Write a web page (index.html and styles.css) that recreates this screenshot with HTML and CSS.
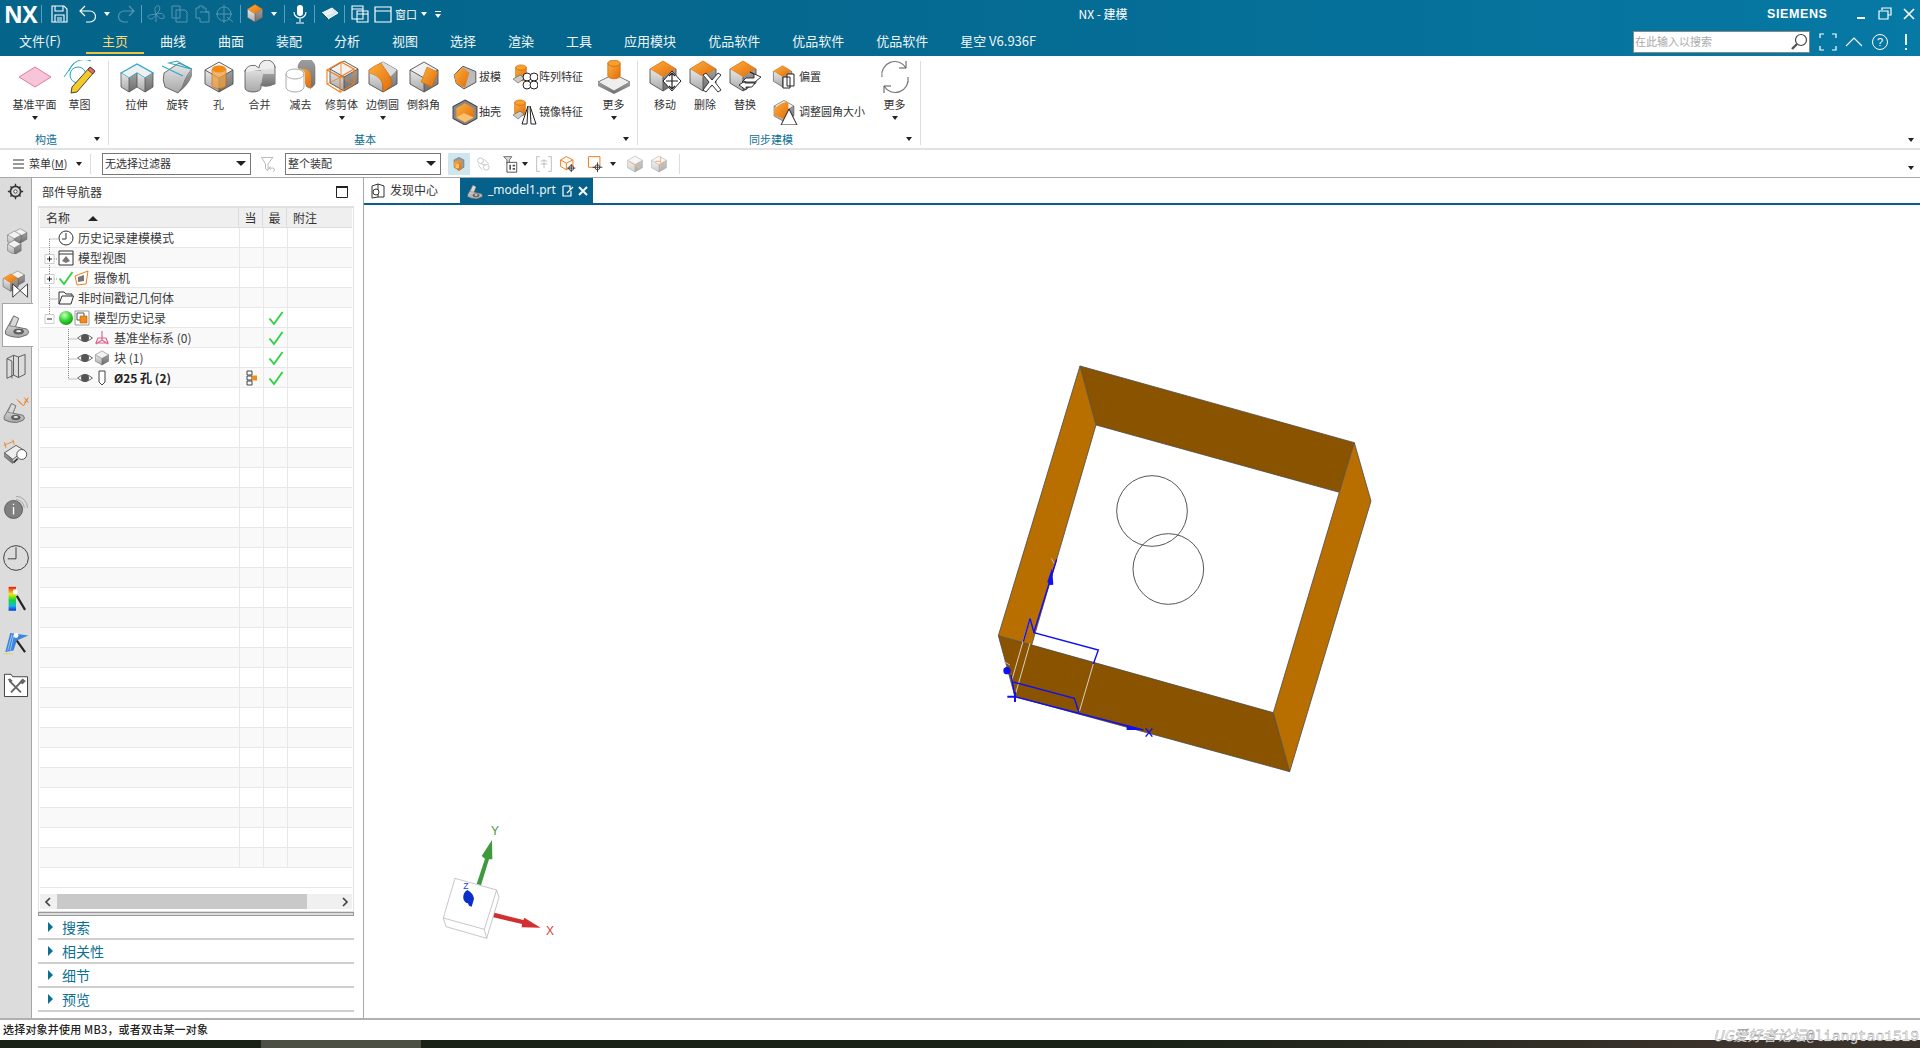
FILE: index.html
```html
<!DOCTYPE html>
<html lang="zh-CN">
<head>
<meta charset="utf-8">
<title>NX - 建模</title>
<link rel="stylesheet" href="styles.css">
</head>
<body>
<svg class="defs" aria-hidden="true">
  <defs>
    <linearGradient id="gl" x1="0" y1="0" x2="0" y2="1"><stop offset="0" stop-color="#e8e8e8"/><stop offset="1" stop-color="#a8a8a8"/></linearGradient>
    <linearGradient id="gd" x1="0" y1="0" x2="0" y2="1"><stop offset="0" stop-color="#a0a0a0"/><stop offset="1" stop-color="#6e6e6e"/></linearGradient>
    <linearGradient id="go" x1="0" y1="0" x2="1" y2="1"><stop offset="0" stop-color="#fbb040"/><stop offset="1" stop-color="#e26b08"/></linearGradient>
    <radialGradient id="gb" cx=".4" cy=".3" r=".8"><stop offset="0" stop-color="#c8ffc0"/><stop offset=".5" stop-color="#33d633"/><stop offset="1" stop-color="#0a8a12"/></radialGradient>
    <symbol id="cube" viewBox="0 0 34 34"><path d="M17 2 31 10 17 18 3 10z" fill="#f2f2f2"/><path d="M3 10 17 18V32L3 24z" fill="url(#gl)"/><path d="M17 18 31 10V24L17 32z" fill="url(#gd)"/><path d="M17 2 31 10V24L17 32 3 24V10zM3 10 17 18 31 10M17 18V32" fill="none" stroke="#505050" stroke-width=".9"/></symbol>
    <symbol id="ocube" viewBox="0 0 34 34"><path d="M15 1 28 9 15 17 2 9z" fill="url(#go)" stroke="#d86c08" stroke-width=".8"/><path d="M2 9 15 17V31L2 23z" fill="url(#gl)"/><path d="M15 17 28 9V23L15 31z" fill="url(#gd)"/><path d="M2 9V23L15 31 28 23V9M15 17V31" fill="none" stroke="#505050" stroke-width=".9"/></symbol>
    <symbol id="cyl" viewBox="0 0 34 34"><path d="M10 6V20A7 3.5 0 0 0 24 20V6z" fill="url(#go)" stroke="#c85f00" stroke-width=".8"/><ellipse cx="17" cy="6" rx="7" ry="3.5" fill="#f9a030" stroke="#c85f00" stroke-width=".8"/></symbol>
    <symbol id="part" viewBox="0 0 34 34"><path d="M3 24 13 6 19 9 15 19 29 22Q33 26 29 29L20 32Q9 32 3 28z" fill="url(#gl)" stroke="#555"/><path d="M13 6 19 9 15 19 8 18z" fill="#dadada" stroke="#555" stroke-width=".7"/><ellipse cx="19" cy="25" rx="6" ry="3" fill="#666" stroke="#333" stroke-width=".7"/><ellipse cx="19" cy="24.5" rx="3" ry="1.4" fill="#e8e8e8"/></symbol>
    <symbol id="check" viewBox="0 0 16 16"><path d="M1.5 8.5 6 14 14.5 2" fill="none" stroke="#2fd044" stroke-width="1.9"/></symbol>
    <symbol id="eye" viewBox="0 0 16 16"><path d="M.5 8Q8 1.5 15.5 8 8 14.5.5 8z" fill="#fff" stroke="#666"/><circle cx="8" cy="8" r="4" fill="#555"/></symbol>
  </defs>
</svg>

<header class="head">
  <div class="titlebar">
    <span class="nx">NX</span>
    <i class="qsep ml5"></i>
    <svg class="qi ml7" viewBox="0 0 20 20"><path d="M3 2H15L18 5V18H3zM6 2V7H14V2M6 18V11H15V18M8 14H13M8 16H13" fill="none" stroke="#fff" stroke-width="1.1"/></svg>
    <svg class="qi ml9" viewBox="0 0 20 20"><path d="M7 2 2 7 7 12M2 7H12A5.5 5.5 0 0 1 12 18H8" fill="none" stroke="#fff" stroke-width="1.2"/></svg>
    <i class="caret w ml6"></i>
    <svg class="qi ml6 dim" viewBox="0 0 20 20"><path d="M13 2 18 7 13 12M18 7H8A5.5 5.5 0 0 0 8 18H12" fill="none" stroke="#fff" stroke-width="1.2"/></svg>
    <i class="qsep ml5"></i>
    <svg class="qi ml4 dim" viewBox="0 0 20 20"><path d="M10 10C7 3 11 1 13 2 15 4 13 8 10 10ZM10 10C16 8 19 11 18 14 15 16 12 13 10 10ZM10 10C6 11 2 10 2 13 3 16 8 16 10 10ZM10 10V18" fill="none" stroke="#fff"/></svg>
    <svg class="qi ml3 dim" viewBox="0 0 20 20"><path d="M3 2H11V14H3zM7 6H16L18 8V18H7z" fill="none" stroke="#fff"/></svg>
    <svg class="qi ml3 dim" viewBox="0 0 20 20"><path d="M4 4H7V2H11V4H14V8H17V18H8V14H4zM8 8H17" fill="none" stroke="#fff"/></svg>
    <svg class="qi ml3 dim" viewBox="0 0 20 20"><circle cx="9" cy="10" r="7" fill="none" stroke="#fff"/><path d="M9 1V19M1 10H17M12 13 18 18" fill="none" stroke="#fff"/></svg>
    <i class="qsep ml5"></i>
    <svg class="qi ml4" viewBox="0 0 34 34"><use href="#ocube" width="34" height="34" x="2"/></svg>
    <i class="caret w ml6"></i>
    <i class="qsep ml7"></i>
    <svg class="qi ml5" viewBox="0 0 20 20"><rect x="7" y="1" width="6" height="11" rx="3" fill="#fff"/><path d="M4 8A6 6 0 0 0 16 8M10 14V18M6 19H14" fill="none" stroke="#fff" stroke-width="1.1"/></svg>
    <i class="qsep ml4"></i>
    <svg class="qi ml5" viewBox="0 0 20 20"><path d="M2 9 12 4 18 9 8 15zM5 9 12 6M5 11 13 8" fill="#d8e8ee" stroke="#fff"/><path d="M2 9 8 15" stroke="#444"/></svg>
    <i class="qsep ml4"></i>
    <svg class="qi ml5" viewBox="0 0 20 20"><path d="M2 2H13V15H2zM2 5H13M7 7H18V18H7zM7 10H18" fill="none" stroke="#fff" stroke-width="1.1"/></svg>
    <svg class="qi ml3" viewBox="0 0 20 20"><path d="M2 3H18V18H2zM2 7H18" fill="none" stroke="#fff" stroke-width="1.2"/></svg>
    <span class="qtext ml2">窗口</span>
    <i class="caret w ml4"></i>
    <span class="qmore ml8"><i class="caret w"></i></span>
    <span class="apptitle">NX - 建模</span>
    <span class="siemens">SIEMENS</span>
    <span class="winbtns">
      <svg class="wb" viewBox="0 0 14 14"><path d="M3 11H11" stroke="#fff" stroke-width="2"/></svg>
      <svg class="wb" viewBox="0 0 14 14"><path d="M4 3V1H13V8H10M1 4H10V12H1z" fill="none" stroke="#fff" stroke-width="1.2"/></svg>
      <svg class="wb" viewBox="0 0 14 14"><path d="M2 2 12 12M12 2 2 12" stroke="#fff" stroke-width="1.6"/></svg>
    </span>
  </div>
  <nav class="menubar">
    <span class="mi mi-file">文件(F)</span>
    <span class="mi active">主页</span>
    <span class="mi">曲线</span>
    <span class="mi">曲面</span>
    <span class="mi">装配</span>
    <span class="mi">分析</span>
    <span class="mi">视图</span>
    <span class="mi">选择</span>
    <span class="mi">渲染</span>
    <span class="mi">工具</span>
    <span class="mi">应用模块</span>
    <span class="mi">优品软件</span>
    <span class="mi">优品软件</span>
    <span class="mi">优品软件</span>
    <span class="mi">星空 V6.936F</span>
    <div class="searchwrap">
      <div class="search"><span>在此输入以搜索</span>
        <svg class="mag" viewBox="0 0 18 18"><circle cx="11" cy="7" r="5.5" fill="#fff" stroke="#444" stroke-width="1.2"/><path d="M7 11 2 16" stroke="#555" stroke-width="2.4"/></svg>
      </div>
      <svg class="hi ml9" viewBox="0 0 18 18"><path d="M1 5V1H5M13 1H17V5M17 13V17H13M5 17H1V13" fill="none" stroke="#fff" stroke-width="1.2"/></svg>
      <svg class="hi ml8" viewBox="0 0 18 18"><path d="M1 13 9 5 17 13" fill="none" stroke="#fff" stroke-width="1.1"/></svg>
      <svg class="hi ml8" viewBox="0 0 18 18"><circle cx="9" cy="9" r="7.5" fill="none" stroke="#fff"/><text x="9" y="13" class="hq">?</text></svg>
      <svg class="hi ml8" viewBox="0 0 18 18"><path d="M9 1V12M9 15V17" stroke="#fff" stroke-width="1.8"/></svg>
    </div>
  </nav>
</header>

<section class="ribbon">
  <div class="grp g1">
    <div class="tools">
      <div class="tool wide"><svg class="ic" viewBox="0 0 34 34"><path d="M1 17 17 7 33 17 17 27z" fill="#f6c6d8" stroke="#e27aa2"/></svg><span>基准平面</span><i class="caret"></i></div>
      <div class="tool wide"><svg class="ic" viewBox="0 0 34 34"><path d="M1 17 11 3M6 11A16 16 0 0 1 28 1" fill="none" stroke="#25a5c8"/><circle cx="15" cy="15" r="8" fill="none" stroke="#25a5c8"/><path d="M27 7 32 11 14 32 8 33 9 27z" fill="#f5c92a" stroke="#333" stroke-width=".9"/><path d="M27 7 32 11 30 14 25 10z" fill="#e86a6a" stroke="#333" stroke-width=".7"/></svg><span>草图</span></div>
    </div>
    <div class="glabel"><span>构造</span><i class="caret"></i></div>
  </div>
  <i class="gsep"></i>
  <div class="grp g2">
    <div class="tools">
      <div class="tool"><svg class="ic" viewBox="0 0 34 34"><path d="M1 13 17 4 33 13 25 18 17 13 9 18z" fill="#f0f0f0" stroke="#27a8cc" stroke-width="1.2"/><path d="M1 13 9 18V32L1 27z" fill="url(#gl)"/><path d="M9 18 17 13V27L9 32z" fill="url(#gd)"/><path d="M17 13 25 18V32L17 27z" fill="url(#gl)"/><path d="M25 18 33 13V27L25 32z" fill="url(#gd)"/><path d="M1 13V27L9 32V18M9 32 17 27 25 32 33 27V13M17 13V27M25 18V32" fill="none" stroke="#505050" stroke-width=".8"/></svg><span>拉伸</span></div>
      <div class="tool"><svg class="ic" viewBox="0 0 34 34"><path d="M3 13 18 3 31 9Q26 15 24 20 22 28 17 33L4 27Q1 20 3 13z" fill="url(#gl)" stroke="#505050" stroke-width=".8"/><path d="M17 33Q22 28 24 20L31 9V16Q27 26 17 33z" fill="url(#gd)"/><path d="M1 6 22 16M8 3 30 9 16 1z" fill="none" stroke="#27a8cc" stroke-width="1.1"/></svg><span>旋转</span></div>
      <div class="tool"><svg class="ic" viewBox="0 0 34 34"><use href="#cube" width="34" height="34"/><path d="M10 9V25A7 3.5 0 0 0 24 25V9z" fill="#f0a040" fill-opacity=".75" stroke="#c85f00" stroke-width=".6"/><ellipse cx="17" cy="9" rx="7" ry="3.5" fill="#f58a12"/></svg><span>孔</span></div>
      <div class="tool"><svg class="ic" viewBox="0 0 34 34"><path d="M2 10V28A8 4 0 0 0 18 28V24H32V6H18V10z" fill="url(#gl)" stroke="#505050" stroke-width=".8"/><path d="M2 12A8 8 0 0 1 16 8 8 8 0 0 1 32 8" fill="#eee" stroke="#505050" stroke-width=".8"/><path d="M20 14H32V24Q26 28 18 26z" fill="url(#gd)"/></svg><span>合并</span></div>
      <div class="tool"><svg class="ic" viewBox="0 0 34 34"><ellipse cx="11" cy="14" rx="9" ry="5" fill="none" stroke="#aaa"/><path d="M2 14V27A9 5 0 0 0 20 27V14" fill="none" stroke="#aaa"/><path d="M14 8A8 8 0 0 1 31 7V24Q27 31 22 26V14Q20 9 14 8z" fill="url(#gd)" stroke="#777" stroke-width=".6"/><path d="M14 9Q21 9 21 14V24L27 29V16Q26 7 14 9z" fill="url(#go)"/></svg><span>减去</span></div>
      <div class="tool"><svg class="ic" viewBox="0 0 34 34"><use href="#cube" width="34" height="34" x="2" y="-1"/><path d="M2 10 16 2 29 9 15 17zM2 10V24L15 32V17M15 32 29 24V9" fill="none" stroke="#ee7d1c" stroke-width="1.1"/><path d="M2 24 16 17 29 24M16 2V17" fill="none" stroke="#ee7d1c" stroke-width=".8"/></svg><span>修剪体</span><i class="caret"></i></div>
      <div class="tool"><svg class="ic" viewBox="0 0 34 34"><use href="#cube" width="34" height="34"/><path d="M17 2 31 10 24 17Q16 11 5 14 1 14 3 10z" fill="#ddd"/><path d="M15 3 24 16Q26 20 25 26L17 32Q18 22 12 17 8 14 3 13 2 8 15 3z" fill="url(#go)" stroke="#c85f00" stroke-width=".5"/></svg><span>边倒圆</span><i class="caret"></i></div>
      <div class="tool"><svg class="ic" viewBox="0 0 34 34"><use href="#cube" width="34" height="34"/><path d="M20 7 31 12 25 27 14 22z" fill="url(#go)" stroke="#c85f00" stroke-width=".5"/></svg><span>倒斜角</span></div>
      <div class="scol c1">
        <div class="srow"><svg class="sic" viewBox="0 0 24 24"><path d="M10 2 22 7V17L11 23 4 18 2 10z" fill="#bbb" stroke="#444" stroke-width=".8"/><path d="M10 3 16 8 12 22 4 18 2 10z" fill="url(#go)"/></svg><span>拔模</span></div>
        <div class="srow"><svg class="sic" viewBox="0 0 24 24"><path d="M12 1 23 7V18L12 24 1 18V7z" fill="#888" stroke="#444"/><path d="M12 4 20 8.500V17L12 21.500 4 17V8.500z" fill="url(#go)"/><path d="M4 17 11 13 20 17 12 21.500z" fill="#fbc070"/></svg><span>抽壳</span></div>
      </div>
      <div class="scol c2">
        <div class="srow"><svg class="sic" viewBox="0 0 26 26"><use href="#cyl" width="26" height="26" x="-4" y="-1"/><path d="M1 15 8 11 13 14 6 19z" fill="#ccc" stroke="#555" stroke-width=".6"/><circle cx="15" cy="13" r="4" fill="#fff" stroke="#222"/><circle cx="22" cy="13" r="4" fill="#fff" stroke="#222"/><circle cx="15" cy="21" r="4" fill="#fff" stroke="#222"/><circle cx="22" cy="21" r="4" fill="#fff" stroke="#222"/></svg><span>阵列特征</span></div>
        <div class="srow"><svg class="sic" viewBox="0 0 26 26"><use href="#cyl" width="26" height="26" x="-5" y="-1"/><path d="M1 16 8 12 12 15 6 20z" fill="#ccc" stroke="#555" stroke-width=".6"/><path d="M16 7 10 25H15zM18 7 24 25H19z" fill="#fff" stroke="#222"/></svg><span>镜像特征</span></div>
      </div>
      <div class="tool more"><svg class="ic" viewBox="0 0 34 34"><path d="M17 14 33 22 17 31 1 22z" fill="#eee" stroke="#555" stroke-width=".8"/><path d="M1 22V26L17 34V31zM17 31V34L33 26V22z" fill="url(#gd)"/><use href="#cyl" width="30" height="30" x="2" y="-2"/></svg><span>更多</span><i class="caret"></i></div>
    </div>
    <div class="glabel"><span>基本</span><i class="caret"></i></div>
  </div>
  <i class="gsep"></i>
  <div class="grp g3">
    <div class="tools">
      <div class="tool t40"><svg class="ic" viewBox="0 0 34 34"><use href="#ocube" width="34" height="34"/><path d="M24 11 33 21 24 31 15 21z" fill="#fff" stroke="#222"/><path d="M24 14V28M18 21H30M21 16 24 13 27 16M21 26 24 29 27 26" fill="none" stroke="#222" stroke-width="1.2"/></svg><span>移动</span></div>
      <div class="tool t40"><svg class="ic" viewBox="0 0 34 34"><use href="#ocube" width="34" height="34"/><path d="M15 15 18 13 24 20 30 13 33 15 27 22 33 30 30 32 24 25 18 32 15 30 21 22z" fill="#fff" stroke="#333"/></svg><span>删除</span></div>
      <div class="tool t40"><svg class="ic" viewBox="0 0 34 34"><use href="#ocube" width="34" height="34"/><path d="M22 12 33 17 27 22H14L18 18H26V14zM18 30 11 25 17 21V23H27L24 27H18z" fill="#fff" stroke="#222" stroke-width=".9"/></svg><span>替换</span></div>
      <div class="scol c3">
        <div class="srow"><svg class="sic" viewBox="0 0 26 26"><use href="#ocube" width="24" height="24" y="1"/><path d="M11 13H18V24H11zM15 10H22V22H15z" fill="#fff" stroke="#222"/></svg><span>偏置</span></div>
        <div class="srow"><svg class="sic" viewBox="0 0 26 26"><use href="#cube" width="24" height="24"/><path d="M2 10Q10 2 16 3 18 12 12 20L2 16z" fill="url(#go)"/><path d="M17 10 25 26H9z" fill="#fff" stroke="#222"/></svg><span>调整圆角大小</span></div>
      </div>
      <div class="tool more2"><svg class="ic" viewBox="0 0 34 34"><path d="M4 17A13 13 0 0 1 28 8M30 17A13 13 0 0 1 6 26" fill="none" stroke="#777" stroke-width="1.2"/><path d="M28 1V8H21M6 33V26H13" fill="none" stroke="#555"/></svg><span>更多</span><i class="caret"></i></div>
    </div>
    <div class="glabel"><span>同步建模</span><i class="caret"></i></div>
  </div>
  <i class="gsep"></i>
  <i class="caret endcaret"></i>
</section>

<section class="toolbar">
  <svg class="burger" viewBox="0 0 11 10"><path d="M0 1H11M0 5H11M0 9H11" stroke="#333"/></svg>
  <span class="tbtext">菜单(<u>M</u>)</span>
  <i class="caret ml5"></i>
  <i class="tsep ml8"></i>
  <div class="combo cb1 ml11"><span>无选择过滤器</span><i class="caret big"></i></div>
  <svg class="tb ml6" viewBox="0 0 22 22"><path d="M3 3H17L11 11V19L8 17V11z" fill="#fff" stroke="#aaa"/><path d="M14 14 12 16 14 18M12 16H17A2 2 0 0 1 17 20" fill="none" stroke="#aaa"/></svg>
  <div class="combo cb2 ml6"><span>整个装配</span><i class="caret big"></i></div>
  <svg class="tb on ml7" viewBox="0 0 22 22"><path d="M11 3 17 6V15L11 19 5 15V6z" fill="#9a9a9a" stroke="#666" stroke-width=".7"/><path d="M5 9 11 6 14 8V17L11 19 5 15z" fill="url(#go)"/><path d="M7 11H11V16H7z" fill="#fbc070"/></svg>
  <svg class="tb ml2 faint" viewBox="0 0 22 22"><circle cx="8" cy="7" r="3.500" fill="none" stroke="#888"/><circle cx="15" cy="15" r="3.500" fill="none" stroke="#888"/><path d="M5 12 10 18M12 5 18 11M8 10 14 13" stroke="#888" fill="none"/></svg>
  <svg class="tb ml6" viewBox="0 0 22 22"><path d="M2 2H12L9 6V10H6V6z" fill="#ddd" stroke="#333" stroke-width=".8"/><path d="M6 9H18V21H6z" fill="#fff" stroke="#333"/><path d="M13 12H16V14H13zM13 16H16V18H13zM9 12H11V18H9z" fill="#555"/></svg>
  <i class="caret"></i>
  <svg class="tb ml5 faint" viewBox="0 0 22 22"><path d="M2 2H6M2 2V20H6M16 2H20V20H16M11 6V16M7 11H15M7 8 11 6 15 8" fill="none" stroke="#777"/></svg>
  <svg class="tb ml2" viewBox="0 0 22 22"><path d="M9 2 17 6V14L9 18 2 14V6zM2 6 9 10 17 6M9 10V18" fill="none" stroke="#ee7d1c" stroke-width="1.2"/><circle cx="15" cy="16" r="3" fill="#fff" stroke="#222"/><path d="M15 11V21M10 16H20" stroke="#222"/></svg>
  <svg class="tb ml5" viewBox="0 0 22 22"><path d="M3 2H17V15H3z" fill="none" stroke="#ee7d1c" stroke-width="1.2"/><circle cx="14" cy="15" r="3" fill="#fff" stroke="#222"/><path d="M14 9V21M8 15H20" stroke="#222"/></svg>
  <i class="caret ml4"></i>
  <svg class="tb ml8 faint" viewBox="0 0 34 34"><use href="#cube" width="34" height="34"/><path d="M6 12 26 24" stroke="#ee7d1c" stroke-width="2"/></svg>
  <svg class="tb ml2 faint" viewBox="0 0 34 34"><use href="#cube" width="34" height="34"/><path d="M20 3V28M20 12H10" stroke="#ee7d1c" stroke-width="2"/></svg>
  <i class="tsep ml9"></i>
  <i class="caret endcaret2"></i>
</section>

<main class="main">
  <aside class="rail">
    <svg class="ri gear" viewBox="0 0 20 20"><circle cx="10" cy="10" r="6" fill="none" stroke="#333" stroke-width="2"/><circle cx="10" cy="10" r="2" fill="#fff" stroke="#333"/><path d="M10 1V4M10 16V19M1 10H4M16 10H19M4 4 6 6M14 14 16 16M16 4 14 6M4 16 6 14" stroke="#333" stroke-width="1.6"/></svg>
    <div class="rslot mt18"><svg class="ri" viewBox="0 0 34 34"><use href="#cube" width="20" height="20" x="12" y="2"/><use href="#cube" width="20" height="20" x="5" y="5"/><use href="#cube" width="20" height="20" x="5" y="16"/></svg></div>
    <div class="rslot mt8"><svg class="ri" viewBox="0 0 34 34"><use href="#cube" width="20" height="20" x="9"/><use href="#ocube" width="24" height="24" y="4"/><path d="M13 17 31 33V17L13 33z" fill="#fff" stroke="#222"/></svg></div>
    <div class="rslot ractive mt1"><svg class="ri" viewBox="0 0 34 34"><use href="#part" width="34" height="34"/></svg></div>
    <div class="rslot mt1"><svg class="ri" viewBox="0 0 34 34"><path d="M6 8 14 4V28L6 32zM14 4 20 6 28 3V27L20 31 14 28M20 6V31" fill="none" stroke="#444"/><path d="M6 8 12 11V32" fill="none" stroke="#444"/></svg></div>
    <div class="rslot mt8"><svg class="ri" viewBox="0 0 34 34"><use href="#part" width="30" height="30" y="4"/><path d="M20 6 26 12 31 4M18 4 24 10M27 2 32 8M32 2 27 8" fill="none" stroke="#ee7d1c" stroke-width="1.200"/></svg></div>
    <div class="rslot mt6"><svg class="ri" viewBox="0 0 34 34"><path d="M3 18 17 9 27 15 13 26z" fill="#eee" stroke="#444"/><path d="M3 18V23L13 31V26z" fill="url(#gd)" stroke="#444" stroke-width=".6"/><circle cx="24" cy="20" r="6" fill="#fff" stroke="#333"/><path d="M19 25 14 30" stroke="#333" stroke-width="2"/><path d="M2 9 14 4M3 5 5 12M13 2 15 8" fill="none" stroke="#ee7d1c"/></svg></div>
    <div class="rslot mt19"><svg class="ri" viewBox="0 0 34 34"><circle cx="14" cy="20" r="11" fill="#808080" stroke="#555"/><path d="M14 13V14.500M14 17V26" stroke="#fff" stroke-width="1.6"/><path d="M17 4A14 14 0 0 1 31 18M17 8A10 10 0 0 1 27 18" fill="none" stroke="#999"/></svg></div>
    <div class="rslot mt15"><svg class="ri" viewBox="0 0 34 34"><circle cx="17" cy="17" r="15" fill="none" stroke="#333" stroke-width="1.100"/><path d="M17 4V18H7" fill="none" stroke="#333" stroke-width="1.100"/></svg></div>
    <div class="rslot mt6"><svg class="ri" viewBox="0 0 34 34"><defs><linearGradient id="rb" x1="0" y1="0" x2="0" y2="1"><stop offset="0" stop-color="#e51616"/><stop offset=".3" stop-color="#f5e51c"/><stop offset=".55" stop-color="#18d82c"/><stop offset=".8" stop-color="#18b4e8"/><stop offset="1" stop-color="#1030d0"/></linearGradient></defs><rect x="8" y="1" width="9" height="29" fill="url(#rb)"/><path d="M18 12 28 29" stroke="#222" stroke-width="2.600"/><circle cx="16" cy="7" r="3" fill="#fff"/></svg></div>
    <div class="rslot mt7"><svg class="ri" viewBox="0 0 34 34"><path d="M4 28 10 5 32 8 18 14 14 26z" fill="#3d85dc"/><path d="M7 26 12 7M10 26 14 8" stroke="#a8d0f0"/><path d="M2 30H14" stroke="#e8c840" stroke-width="1.400" stroke-dasharray="2 1"/><path d="M18 14 28 28" stroke="#222" stroke-width="2.600"/><circle cx="17" cy="8" r="3" fill="#fff"/></svg></div>
    <div class="rslot mt6"><svg class="ri" viewBox="0 0 34 34"><path d="M3 31V4H11L13 7H31V31z" fill="#fff" stroke="#222"/><path d="M9 12 23 26M25 11 11 26" fill="none" stroke="#666" stroke-width="2.400"/><path d="M7 10 10 9 13 12 10 14zM21 14 25 9 29 12 25 16z" fill="#666"/></svg></div>
  </aside>

  <section class="panel">
    <div class="ptitle"><span>部件导航器</span><svg class="pmax" viewBox="0 0 12 12"><path d="M.5.5H11.500V11.500H.5z" fill="none" stroke="#222"/><path d="M0 1H12" stroke="#222" stroke-width="2"/></svg></div>
    <div class="tree">
      <div class="thead"><div class="th first">名称<i class="sortup"></i></div><div class="th ctr">当</div><div class="th ctr">最</div><div class="th">附注</div></div>
      <div class="tbody">
        <div class="row"><div class="nm p1"><svg class="ti" viewBox="0 0 16 16"><circle cx="8" cy="8" r="7" fill="#fff" stroke="#333"/><path d="M8 3V9H4" fill="none" stroke="#333"/></svg><span class="tx">历史记录建模模式</span></div><i></i><i></i><i></i></div>
        <div class="row alt"><div class="nm p1"><svg class="ti" viewBox="0 0 16 16"><path d="M1 1H15V15H1zM1 4H15" fill="#fff" stroke="#333"/><path d="M4 11 8 6 12 11 8 13z" fill="#777"/></svg><span class="tx">模型视图</span></div><i></i><i></i><i></i></div>
        <div class="row"><div class="nm p1"><svg class="ti" viewBox="0 0 16 16"><use href="#check"/></svg><svg class="ti" viewBox="0 0 16 16"><path d="M1 6 14 1 12 14 3 15z" fill="#fff" stroke="#ee7d1c"/><path d="M4 7 10 5V11L4 12z" fill="#777"/></svg><span class="tx">摄像机</span></div><i></i><i></i><i></i></div>
        <div class="row alt"><div class="nm p1"><svg class="ti" viewBox="0 0 16 16"><path d="M1 14V2H6L8 4H14V6M1 14 4 6H15.500L13 14z" fill="none" stroke="#333"/></svg><span class="tx">非时间戳记几何体</span></div><i></i><i></i><i></i></div>
        <div class="row"><div class="nm p1"><svg class="ti" viewBox="0 0 16 16"><circle cx="8" cy="8" r="7" fill="url(#gb)"/></svg><svg class="ti" viewBox="0 0 16 16"><path d="M1 1H15V15H1z" fill="#fff" stroke="#999"/><path d="M3 3H10V10H3z" fill="#fff" stroke="#555"/><path d="M6 6H13V13H6z" fill="#f08c1c" stroke="#b85a00" stroke-width=".6"/></svg><span class="tx">模型历史记录</span></div><i></i><i class="ck"><svg class="ti" viewBox="0 0 16 16"><use href="#check"/></svg></i><i></i></div>
        <div class="row alt"><div class="nm p2"><svg class="ti" viewBox="0 0 16 16"><use href="#eye"/></svg><svg class="ti" viewBox="0 0 16 16"><path d="M8 1V10L2 14M8 10 14 14M4 8H12L14 13H2z" fill="none" stroke="#d9668f" stroke-width="1.200"/></svg><span class="tx">基准坐标系 (0)</span></div><i></i><i class="ck"><svg class="ti" viewBox="0 0 16 16"><use href="#check"/></svg></i><i></i></div>
        <div class="row"><div class="nm p2"><svg class="ti" viewBox="0 0 16 16"><use href="#eye"/></svg><svg class="ti" viewBox="0 0 34 34"><use href="#cube" width="34" height="34"/></svg><span class="tx">块 (1)</span></div><i></i><i class="ck"><svg class="ti" viewBox="0 0 16 16"><use href="#check"/></svg></i><i></i></div>
        <div class="row alt"><div class="nm p2"><svg class="ti" viewBox="0 0 16 16"><use href="#eye"/></svg><svg class="ti" viewBox="0 0 16 16"><path d="M5 1H11V12L8 15 5 12z" fill="#fff" stroke="#444"/></svg><span class="tx bold">Ø25 孔 (2)</span></div><i class="ck"><svg class="ti small" viewBox="0 0 12 16"><path d="M1 1H6V5H1zM1 6H6V10H1zM1 11H6V15H1zM6 8H11" fill="none" stroke="#444"/><path d="M6 5.500H11V10.500H6z" fill="#f08c1c"/></svg></i><i class="ck"><svg class="ti" viewBox="0 0 16 16"><use href="#check"/></svg></i><i></i></div>
        <div class="row"><div class="nm"></div><i></i><i></i><i></i></div><div class="row alt"><div class="nm"></div><i></i><i></i><i></i></div>
        <div class="row"><div class="nm"></div><i></i><i></i><i></i></div><div class="row alt"><div class="nm"></div><i></i><i></i><i></i></div>
        <div class="row"><div class="nm"></div><i></i><i></i><i></i></div><div class="row alt"><div class="nm"></div><i></i><i></i><i></i></div>
        <div class="row"><div class="nm"></div><i></i><i></i><i></i></div><div class="row alt"><div class="nm"></div><i></i><i></i><i></i></div>
        <div class="row"><div class="nm"></div><i></i><i></i><i></i></div><div class="row alt"><div class="nm"></div><i></i><i></i><i></i></div>
        <div class="row"><div class="nm"></div><i></i><i></i><i></i></div><div class="row alt"><div class="nm"></div><i></i><i></i><i></i></div>
        <div class="row"><div class="nm"></div><i></i><i></i><i></i></div><div class="row alt"><div class="nm"></div><i></i><i></i><i></i></div>
        <div class="row"><div class="nm"></div><i></i><i></i><i></i></div><div class="row alt"><div class="nm"></div><i></i><i></i><i></i></div>
        <div class="row"><div class="nm"></div><i></i><i></i><i></i></div><div class="row alt"><div class="nm"></div><i></i><i></i><i></i></div>
        <div class="row"><div class="nm"></div><i></i><i></i><i></i></div><div class="row alt"><div class="nm"></div><i></i><i></i><i></i></div>
        <div class="row"><div class="nm"></div><i></i><i></i><i></i></div><div class="row alt"><div class="nm"></div><i></i><i></i><i></i></div>
        <div class="row"><div class="nm"></div><i></i><i></i><i></i></div><div class="row alt"><div class="nm"></div><i></i><i></i><i></i></div>
        <div class="row"><div class="nm"></div></div>
        <svg class="treelines" viewBox="0 0 60 170">
          <path d="M9.500 10V90M9.500 10H18M14 30H18M14 50H18M9.500 70H18M28.500 100V150M28.500 110H37M28.500 130H37M28.500 150H37" fill="none" stroke="#888" stroke-dasharray="1 1"/>
          <path d="M5 25.500H14V34.500H5zM5 45.500H14V54.500H5zM5 85.500H14V94.500H5z" fill="#fff" stroke="#ccc"/>
          <path d="M7 30H12M9.500 27.500V32.500M7 50H12M9.500 47.500V52.500M7 90H12" stroke="#222"/>
        </svg>
      </div>
      <div class="hscroll"><svg class="sc" viewBox="0 0 10 10"><path d="M7 1 3 5 7 9" fill="none" stroke="#444" stroke-width="1.700"/></svg><i class="thumb"></i><svg class="sc" viewBox="0 0 10 10"><path d="M3 1 7 5 3 9" fill="none" stroke="#444" stroke-width="1.700"/></svg></div>
    </div>
    <i class="splitter"></i>
    <div class="acc"><i class="tri"></i><span>搜索</span></div>
    <div class="acc"><i class="tri"></i><span>相关性</span></div>
    <div class="acc"><i class="tri"></i><span>细节</span></div>
    <div class="acc"><i class="tri"></i><span>预览</span></div>
  </section>

  <section class="work">
    <div class="tabs">
      <div class="tab"><svg class="tabic" viewBox="0 0 16 16"><path d="M2 3 8 1V14L2 15zM8 1 14 3V14L8 14" fill="none" stroke="#333"/><circle cx="6" cy="9" r="3" fill="#fff" stroke="#333"/></svg><span>发现中心</span></div>
      <div class="tab cur"><svg class="tabic big" viewBox="0 0 34 34"><use href="#part" width="34" height="34"/></svg><span class="fname">_model1.prt</span>
        <svg class="docic" viewBox="0 0 12 12"><path d="M1 1H8V4M1 1V11H9V6M5 8 11 2" fill="none" stroke="#fff" stroke-width="1.200"/></svg>
        <svg class="xic" viewBox="0 0 10 10"><path d="M1 1 9 9M9 1 1 9" stroke="#fff" stroke-width="1.900"/></svg>
      </div>
    </div>
    <div class="view">
      <svg class="scene" viewBox="364 205 1556 813">
        <g transform="translate(980 350) scale(.33333)">
          <path d="M300 48 348 225 155 885 55 857z" fill="#b96f00"/>
          <path d="M300 48 1123 278 1078 427 348 225z" fill="#8a5300"/>
          <path d="M1123 278 1173 453 929 1265 880 1088 1078 427z" fill="#b96f00"/>
          <path d="M55 857 880 1088 929 1265 105 1040z" fill="#8a5300"/>
          <path d="M300 48 1123 278 1173 453 929 1265 105 1040 55 857zM300 48 348 225 1078 427 1123 278M1078 427 880 1088 929 1265M880 1088 55 857M348 225 155 885" fill="none" stroke="#4a4a4a" stroke-width="2.400"/>
          <circle cx="516" cy="483" r="106" fill="none" stroke="#555" stroke-width="3"/>
          <circle cx="565" cy="657" r="106" fill="none" stroke="#555" stroke-width="3"/>
          <path d="M150 880 107 1030M128 878 95 992M150 805 128 878M340 942 298 1085" fill="none" stroke="#d8d0c0" stroke-width="3"/>
          <g fill="none" stroke="#1010f0" stroke-width="4.200">
            <path d="M162 846 230 628M150 805 162 848 355 900 340 942M150 805 130 875M93 975 105 1040M95 995 283 1045 297 1087M105 1040 490 1140M497 1135 517 1160M517 1135 497 1160"/>
            <path d="M82 1040H108M105 1025V1056" stroke-width="6"/>
          </g>
          <path d="M210 705 202 695 216 655 220 704zM440 1125 490 1140 440 1140z" fill="#1010f0"/>
          <path d="M214 625 222 640M72 935 90 945" stroke="#bbb" stroke-width="3"/>
          <circle cx="81" cy="962" r="11" fill="#1010f0"/>
        </g>
        <g transform="translate(430 810) scale(.33333)">
          <path d="M140 222 165 146 155 138 186 90 187 148 177 148 153 226z" fill="#3f9a3f"/>
          <path d="M185 306 280 330 283 323 332 353 275 352 276 342 184 320z" fill="#d23030"/>
          <path d="M75 205 200 240 163 358 40 324zM200 240 207 262 170 385 163 358M40 324 48 350 170 385" fill="#fff" stroke="#bbb" stroke-width="2.500"/>
          <path d="M112 240Q98 248 100 266 104 278 114 280 116 290 125 290 128 280 132 266 130 250 112 240z" fill="#0a2fc8"/>
          <text class="ax az" x="100" y="238">Z</text>
          <text class="ax ay" x="183" y="74">Y</text>
          <text class="ax ax-x" x="348" y="374">X</text>
        </g>
      </svg>
    </div>
  </section>
</main>

<footer class="status"><span>选择对象并使用 MB3，或者双击某一对象</span></footer>
<div class="taskbar"><i class="tpatch"></i><span class="clock">10:25</span></div>
<div class="wm"><span class="wmc">UG爱好者论坛</span>@liangtao1519</div>
</body>
</html>
```
FILE: styles.css
```css
* { box-sizing: border-box; }
html, body { margin: 0; height: 100%; }
body {
  width: 1920px; height: 1048px; overflow: hidden; position: relative;
  display: flex; flex-direction: column; background: #fff; color: #333;
  font: 12px/1.2 "Noto Sans CJK SC", "Noto Sans", sans-serif;
}
i { font-style: normal; }
svg { display: block; flex: none; }
.defs { width: 0; height: 0; position: absolute; }
.ml2 { margin-left: 2px; } .ml3 { margin-left: 3px; } .ml4 { margin-left: 4px; }
.ml5 { margin-left: 5px; } .ml6 { margin-left: 6px; } .ml7 { margin-left: 7px; }
.ml8 { margin-left: 8px; } .ml9 { margin-left: 9px; } .ml11 { margin-left: 11px; }
.mt1 { margin-top: 1px; } .mt6 { margin-top: 6px; } .mt7 { margin-top: 7px; } .mt8 { margin-top: 8px; }
.mt15 { margin-top: 15px; } .mt18 { margin-top: 18px; } .mt19 { margin-top: 19px; }

.caret { display: block; flex: none; width: 0; height: 0; border: 3px solid transparent; border-bottom: 0; border-top: 4px solid #222; }
.caret.w { border-top-color: #fff; }
.caret.big { border-width: 5px 5px 0; }

/* header */
.head { height: 56px; flex: none; background: linear-gradient(90deg, #05648a 0%, #05688f 40%, #0679a4 100%); color: #fff; }
.titlebar { height: 28px; display: flex; align-items: center; padding-left: 4px; }
.nx { width: 32px; font: 700 23px/28px "Open Sans", sans-serif; color: #fff; letter-spacing: -.5px; }
.qsep { width: 1px; height: 18px; background: #5aa0bc; flex: none; }
.qi { width: 20px; height: 20px; }
.qi.dim { opacity: .32; }
.qtext { width: 22px; font-size: 11px; line-height: 14px; white-space: nowrap; }
.qmore { display: flex; flex-direction: column; align-items: center; width: 6px; border-top: 1px solid #fff; padding-top: 2px; }
.apptitle { flex: 1; text-align: center; font-size: 12px; padding-right: 2px; }
.siemens { font: 700 12.500px/28px "Liberation Sans", sans-serif; letter-spacing: .6px; width: 61px; white-space: nowrap; margin-right: 26px; }
.winbtns { display: flex; gap: 10px; padding-right: 4px; }
.wb { width: 14px; height: 14px; }

.menubar { height: 28px; display: flex; align-items: stretch; padding-left: 3px; }
.mi { padding: 0 16px; font-size: 13px; line-height: 25px; color: #eef6f9; white-space: nowrap; border-bottom: 3px solid transparent; }
.mi-file { margin-right: 9px; }
.mi.active { color: #f8d878; border-bottom: 2px solid #f3c03c; padding-bottom: 0; height: 26px; }
.searchwrap { margin-left: auto; display: flex; align-items: center; padding-right: 5px; height: 26px; margin-top: 1px; }
.search { width: 177px; height: 22px; background: #fff; border: 1px solid #888; display: flex; align-items: center; justify-content: space-between; padding: 0 1px 0 1px; color: #aaa; font-size: 11px; }
.mag { width: 18px; height: 18px; }
.hi { width: 18px; height: 18px; }
.hq { font: 11px "Liberation Sans", sans-serif; fill: #fff; text-anchor: middle; }

/* ribbon */
.ribbon { height: 94px; flex: none; display: flex; padding-top: 4px; border-bottom: 2px solid #e2e2e2; position: relative; }
.grp { display: flex; flex-direction: column; flex: none; }
.g1 { width: 108px; } .g2 { width: 528px; } .g3 { width: 282px; }
.g1 .tools { padding-left: 12px; }
.g2 .tools { padding-left: 7px; }
.g3 .tools { padding-left: 7px; }
.tools { display: flex; height: 71px; }
.tool { width: 41px; flex: none; display: flex; flex-direction: column; align-items: center; font-size: 11px; line-height: 16px; color: #333; white-space: nowrap; }
.tool.wide { width: 45px; }
.tool.t40 { width: 40px; }
.tool .caret { margin-top: 4px; }
.tool > span { margin-top: 2px; }
.tool.more { margin-left: 3px; }
.tool.more2 { margin-left: 9px; }
.ic { width: 34px; height: 34px; }
.scol { display: flex; flex-direction: column; gap: 1px; font-size: 11px; flex: none; }
.c1 { margin-left: 8px; width: 60px; } .c2 { width: 78px; } .c3 { margin-left: 7px; }
.srow { height: 34px; display: flex; align-items: center; gap: 1px; white-space: nowrap; color: #333; }
.sic { width: 26px; height: 26px; }
.glabel { height: 18px; display: grid; grid-template-columns: 1fr 16px; align-items: center; font-size: 11px; line-height: 18px; color: #0b7092; text-align: center; }
.glabel .caret { margin-left: 2px; }
.gsep { width: 1px; height: 84px; background: #ddd; flex: none; margin-top: 1px; }
.endcaret { margin-left: auto; margin-right: 6px; align-self: flex-end; margin-bottom: 6px; }

/* toolbar */
.toolbar { height: 28px; flex: none; display: flex; align-items: center; padding-left: 13px; border-bottom: 1px solid #a8a8a8; }
.burger { width: 11px; height: 10px; margin-right: 5px; }
.tbtext { font-size: 11px; width: 42px; white-space: nowrap; }
.tsep { width: 1px; height: 20px; background: #ddd; flex: none; }
.combo { height: 22px; border: 1px solid #777; display: flex; align-items: center; justify-content: space-between; padding: 0 4px 0 2px; font-size: 11px; flex: none; }
.cb1 { width: 149px; } .cb2 { width: 156px; }
.tb { width: 22px; height: 22px; padding: 2px; }
.tb.on { background: #cfe6ee; }
.tb.faint { opacity: .55; }
.endcaret2 { margin-left: auto; margin-right: 6px; margin-top: 8px; }

/* main */
.main { height: 840px; flex: none; display: flex; }
.rail { width: 32px; flex: none; background: #dcdcdc; border-right: 1px solid #a6a6a6; display: flex; flex-direction: column; align-items: center; }
.rslot { height: 36px; width: 100%; display: flex; align-items: center; justify-content: center; flex: none; }
.ri { width: 28px; height: 28px; }
.rail .gear { width: 17px; height: 17px; margin-top: 5px; margin-bottom: 4px; }
.ractive { height: 44px; width: 31px; margin-left: 2px; margin-right: -1px; background: #fff; border: 1px solid #a6a6a6; border-right: 0; padding-right: 2px; }

.panel { width: 332px; flex: none; border-right: 1px solid #a8a8a8; display: flex; flex-direction: column; padding-left: 6px; padding-right: 9px; }
.ptitle { height: 28px; flex: none; display: flex; align-items: center; justify-content: space-between; padding-left: 4px; padding-right: 6px; color: #333; }
.pmax { width: 12px; height: 12px; }
.tree { height: 706px; flex: none; border: 1px solid #e0e0e0; border-width: 0 1px 1px; border-top: 2px solid #e0e0e0; padding: 0 1px; }
.thead { height: 20px; display: grid; grid-template-columns: 199px 24px 24px 1fr; background: #efefef; border-bottom: 1px solid #ddd; }
.th { border-right: 1px solid #dcdcdc; line-height: 20px; padding-left: 6px; color: #333; }
.th.first { display: flex; align-items: center; }
.th.ctr { padding-left: 0; text-align: center; }
.th:last-child { border-right: 0; }
.sortup { width: 0; height: 0; border: 5px solid transparent; border-top: 0; border-bottom: 5px solid #222; margin-left: 18px; }
.tbody { height: 666px; position: relative; overflow: hidden; }
.row { height: 20px; display: grid; grid-template-columns: 199px 24px 24px 1fr; border-bottom: 1px solid #e8e8e8; }
.row.alt { background: #f9f9f9; }
.row > i { border-left: 1px solid #e8e8e8; display: flex; align-items: center; justify-content: center; padding-top: 1px; }
.nm { display: flex; align-items: center; overflow: visible; white-space: nowrap; color: #3a3a3a; padding-top: 1px; }
.nm.p1 { padding-left: 18px; }
.nm.p2 { padding-left: 37px; gap: 1px; }
.ti { width: 16px; height: 16px; }
.ti.small { width: 12px; height: 16px; }
.tx { margin-left: 4px; }
.nm.p2 .tx { margin-left: 3px; }
.tx.bold { font-weight: 700; color: #222; }
.treelines { position: absolute; left: 0; top: 1px; width: 60px; height: 170px; }
.hscroll { height: 15px; margin-top: 0; background: #f0f0f0; display: flex; align-items: center; padding: 0 3px; justify-content: space-between; }
.sc { width: 10px; height: 10px; }
.thumb { width: 250px; height: 15px; background: #c9c9c9; flex: none; margin-left: 4px; margin-right: 33px; }
.splitter { height: 4px; flex: none; margin-top: 0; background: #dedede; border: 1px solid #999; border-width: 1px 1px 1px; }
.acc { height: 24px; flex: none; display: flex; align-items: center; border-bottom: 2px solid #cfcfcf; color: #0b7092; font-size: 14px; line-height: 20px; padding-left: 10px; }
.tri { width: 0; height: 0; border: 5px solid transparent; border-right: 0; border-left: 5px solid #0b7092; margin-right: 9px; }

.work { flex: 1; display: flex; flex-direction: column; min-width: 0; }
.tabs { height: 27px; flex: none; display: flex; border-bottom: 2px solid #05608a; padding-left: 1px; }
.tab { display: flex; align-items: center; height: 25px; width: 95px; font-size: 12px; padding-left: 5px; gap: 4px; color: #333; }
.tab.cur { width: 133px; background: #05608a; color: #eef6f9; font-size: 12px; padding-left: 6px; gap: 4px; }
.tabic { width: 16px; height: 16px; }
.tabic.big { width: 18px; height: 18px; }
.fname { font-family: "Noto Sans", sans-serif; width: 69px; white-space: nowrap; }
.docic { width: 12px; height: 12px; margin-left: 1px; }
.xic { width: 10px; height: 10px; }
.view { flex: 1; background: #fff; min-height: 0; }
.scene { width: 1556px; height: 813px; }
.ax { font: 300 36px "Liberation Sans", sans-serif; }
.az { fill: #2040e0; font-size: 26px; }
.ay { fill: #3f9a3f; }
.ax-x { fill: #d84040; }

.status { height: 22px; flex: none; border-top: 2px solid #b0b0b0; display: flex; align-items: center; padding-left: 3px; background: #fff; color: #222; font-size: 11px; letter-spacing: .2px; font-weight: 500; }
.taskbar { height: 8px; flex: none; display: flex; background: linear-gradient(90deg, #1a2218 0%, #1a2218 60%, #3b332c 90%, #3a322c 100%); position: relative; overflow: hidden; }
.tpatch { width: 160px; height: 8px; background: #4b4f44; margin-left: 261px; }
.clock { position: absolute; left: 1817px; top: 6px; color: #fff; font-size: 12px; line-height: 14px; }
.wm { position: absolute; right: 1px; top: 1027px; font: 14.500px/16px "Liberation Mono", "Noto Sans CJK SC", monospace; color: #fff; -webkit-text-stroke: .3px #666; white-space: nowrap; }
.wmc { font-style: italic; font-family: "Noto Sans CJK SC", sans-serif; }
```
